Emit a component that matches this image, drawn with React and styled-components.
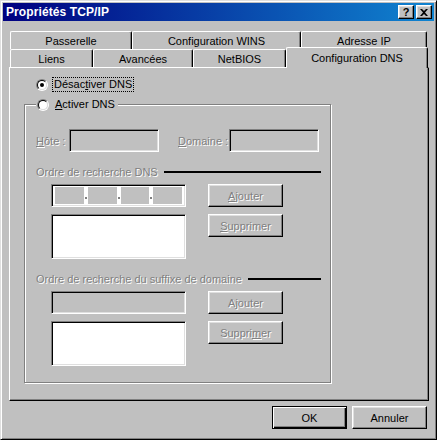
import React from 'react';
import styled, { createGlobalStyle, css } from 'styled-components';

const FONT = '"Liberation Sans", Arial, sans-serif';

const GlobalStyle = createGlobalStyle`
  body {
    margin: 0;
    background: #c0c0c0;
  }
  * {
    box-sizing: border-box;
  }
`;

const raised = css`
  border: 1px solid;
  border-color: #fff #000 #000 #fff;
  box-shadow: inset -1px -1px #808080, inset 1px 1px #dfdfdf;
`;

const sunken = css`
  border: 1px solid;
  border-color: #808080 #fff #fff #808080;
  box-shadow: inset 1px 1px #000, inset -1px -1px #dfdfdf;
`;

const disabledText = css`
  color: #808080;
  text-shadow: 1px 1px 0 #fff;
`;

const Window = styled.div`
  width: 437px;
  height: 440px;
  padding: 2px;
  background: #c0c0c0;
  border: 1px solid;
  border-color: #dfdfdf #000 #000 #dfdfdf;
  box-shadow: inset 1px 1px #fff, inset -1px -1px #808080;
  font: 11px ${FONT};
  color: #000;
  white-space: nowrap;
  display: flex;
  flex-direction: column;
`;

const TitleBar = styled.div`
  height: 18px;
  flex: none;
  display: flex;
  align-items: center;
  padding: 0 2px 0 3px;
  background: linear-gradient(90deg, #000080, #1084d0);
`;

const Title = styled.span`
  flex: 1;
  color: #fff;
  font-weight: bold;
  font-size: 12px;
  letter-spacing: 0.1px;
`;

const TitleButton = styled.button`
  width: 16px;
  height: 14px;
  padding: 0;
  margin-left: ${(p) => p.$gap || 0}px;
  background: #c0c0c0;
  ${raised};
  display: flex;
  align-items: center;
  justify-content: center;
  font: bold 11px ${FONT};
  color: #000;
  line-height: 1;
`;

const Body = styled.div`
  flex: 1;
  display: flex;
  flex-direction: column;
  padding: 10px 5px 0 6px;
`;

const TabRow = styled.div`
  display: flex;
  align-items: flex-end;
  height: 18px;
  padding-left: 1px;
`;

const Tab = styled.div`
  flex: none;
  width: ${(p) => p.$w}px;
  height: ${(p) => (p.$active ? 21 : 18)}px;
  margin-bottom: ${(p) => (p.$active ? -1 : 0)}px;
  position: relative;
  z-index: ${(p) => (p.$active ? 2 : 0)};
  background: #c0c0c0;
  border-top: 1px solid #fff;
  border-left: 1px solid #fff;
  border-right: 1px solid #000;
  border-radius: 2px 2px 0 0;
  box-shadow: inset -1px 0 #808080;
  display: flex;
  align-items: center;
  justify-content: center;
  padding-top: ${(p) => (p.$active ? 0 : 1)}px;
`;

const Panel = styled.div`
  height: 334px;
  flex: none;
  border: 1px solid;
  border-color: #fff #000 #000 #fff;
  box-shadow: inset -1px -1px #808080;
  display: flex;
  flex-direction: column;
  align-items: flex-start;
`;

const RadioRow = styled.label`
  display: flex;
  align-items: center;
  margin: 9px 0 0 26px;
  height: 15px;
`;

const RadioOuter = styled.span`
  flex: none;
  width: 12px;
  height: 12px;
  border-radius: 50%;
  border: 1px solid;
  border-color: #808080 #fff #fff #808080;
  display: flex;
  align-items: center;
  justify-content: center;
`;

const RadioInner = styled.span`
  width: 10px;
  height: 10px;
  border-radius: 50%;
  border: 1px solid;
  border-color: #000 #dfdfdf #dfdfdf #000;
  background: #fff;
  display: flex;
  align-items: center;
  justify-content: center;
`;

const RadioDot = styled.span`
  width: 4px;
  height: 4px;
  border-radius: 50%;
  background: #000;
`;

const RadioLabel = styled.span`
  margin-left: 4px;
  padding: 0 1px;
  border: 1px dotted ${(p) => (p.$focus ? '#000' : 'transparent')};
  line-height: 13px;
`;

const Group = styled.fieldset`
  margin: 5px 0 0 14px;
  width: 307px;
  height: 286px;
  min-width: 0;
  padding: 17px 9px 0 11px;
  border: 1px solid #808080;
  box-shadow: inset 1px 1px #fff, 1px 1px #fff;
  display: flex;
  flex-direction: column;
`;

const Legend = styled.legend`
  padding: 0 1px;
  background: #c0c0c0;
  display: flex;
  align-items: center;
`;

const Row = styled.div`
  display: flex;
  align-items: ${(p) => p.$align || 'flex-start'};
  margin-top: ${(p) => p.$top || 0}px;
  padding-left: ${(p) => p.$indent || 0}px;
`;

const FieldLabel = styled.span`
  width: ${(p) => p.$w}px;
  margin-left: ${(p) => p.$gap || 0}px;
  flex: none;
  ${disabledText};
`;

const Edit = styled.div`
  flex: none;
  width: ${(p) => p.$w}px;
  height: 23px;
  background: #c0c0c0;
  ${sunken};
`;

const IpBox = styled.div`
  flex: none;
  width: 135px;
  height: 23px;
  padding: 2px 3px;
  background: #fff;
  ${sunken};
  display: flex;
`;

const IpPart = styled.span`
  flex: 1;
  background: #c0c0c0;
`;

const IpDot = styled.span`
  width: 4px;
  flex: none;
  display: flex;
  align-items: flex-end;
  justify-content: center;
  padding-bottom: 5px;

  &::after {
    content: '';
    width: 2px;
    height: 2px;
    background: #808080;
  }
`;

const ListBox = styled.div`
  flex: none;
  width: 135px;
  height: 45px;
  background: #fff;
  ${sunken};
`;

const Heading = styled.div`
  display: flex;
  align-items: center;
  height: 13px;
  margin-top: 13px;
`;

const HeadingText = styled.span`
  ${disabledText};
`;

const HeadingRule = styled.span`
  flex: 1;
  height: 2px;
  margin-left: 6px;
  background: #000;
`;

const Button = styled.button`
  flex: none;
  width: 75px;
  height: 23px;
  margin-left: ${(p) => p.$gap || 0}px;
  padding: 0;
  background: #c0c0c0;
  ${raised};
  font: 11px ${FONT};
  color: #000;

  &:disabled {
    ${disabledText};
  }

  ${(p) =>
    p.$default &&
    css`
      border-color: #000;
      box-shadow: inset 1px 1px #fff, inset -1px -1px #000, inset -2px -2px #808080;
    `}
`;

const ButtonBar = styled.div`
  display: flex;
  justify-content: flex-end;
  gap: 5px;
  margin-top: 5px;
  padding-right: 2px;
`;

const CloseIcon = () => (
  <svg width="8" height="7" viewBox="0 0 8 7">
    <path d="M0 0h2l2 2 2-2h2L5 3.5 8 7H6L4 5 2 7H0l3-3.5z" fill="#000" />
  </svg>
);

const Radio = ({ checked }) => (
  <RadioOuter>
    <RadioInner>{checked && <RadioDot />}</RadioInner>
  </RadioOuter>
);

const IpField = () => (
  <IpBox>
    <IpPart />
    <IpDot />
    <IpPart />
    <IpDot />
    <IpPart />
    <IpDot />
    <IpPart />
  </IpBox>
);

const backTabs = [
  ['Passerelle', 122],
  ['Configuration WINS', 169],
  ['Adresse IP', 126],
];

const frontTabs = [
  ['Liens', 83],
  ['Avancées', 100],
  ['NetBIOS', 93],
  ['Configuration DNS', 142, true],
];

export default function App() {
  return (
    <>
      <GlobalStyle />
      <Window>
        <TitleBar>
          <Title>Propriétés TCP/IP</Title>
          <TitleButton>?</TitleButton>
          <TitleButton $gap={2}>
            <CloseIcon />
          </TitleButton>
        </TitleBar>
        <Body>
          <TabRow>
            {backTabs.map(([label, w]) => (
              <Tab key={label} $w={w}>
                {label}
              </Tab>
            ))}
          </TabRow>
          <TabRow>
            {frontTabs.map(([label, w, active]) => (
              <Tab key={label} $w={w} $active={active}>
                {label}
              </Tab>
            ))}
          </TabRow>
          <Panel>
            <RadioRow>
              <Radio checked />
              <RadioLabel $focus>
                Désac<u>t</u>iver DNS
              </RadioLabel>
            </RadioRow>
            <Group>
              <Legend>
                <Radio />
                <RadioLabel>
                  <u>A</u>ctiver DNS
                </RadioLabel>
              </Legend>
              <Row $align="center">
                <FieldLabel $w={33}>
                  <u>H</u>ôte :
                </FieldLabel>
                <Edit $w={90} />
                <FieldLabel $w={51} $gap={19}>
                  <u>D</u>omaine :
                </FieldLabel>
                <Edit $w={90} />
              </Row>
              <Heading>
                <HeadingText>Ordre de recherche DNS</HeadingText>
                <HeadingRule />
              </Heading>
              <Row $top={6} $indent={15}>
                <IpField />
                <Button $gap={22} disabled>
                  <u>A</u>jouter
                </Button>
              </Row>
              <Row $top={7} $indent={15}>
                <ListBox />
                <Button $gap={22} disabled>
                  <u>S</u>upprimer
                </Button>
              </Row>
              <Heading>
                <HeadingText>Ordre de recherche du suffixe de domaine</HeadingText>
                <HeadingRule />
              </Heading>
              <Row $top={6} $indent={15}>
                <Edit $w={135} />
                <Button $gap={22} disabled>
                  A<u>j</u>outer
                </Button>
              </Row>
              <Row $top={7} $indent={15}>
                <ListBox />
                <Button $gap={22} disabled>
                  Suppri<u>m</u>er
                </Button>
              </Row>
            </Group>
          </Panel>
          <ButtonBar>
            <Button $default>OK</Button>
            <Button>Annuler</Button>
          </ButtonBar>
        </Body>
      </Window>
    </>
  );
}
